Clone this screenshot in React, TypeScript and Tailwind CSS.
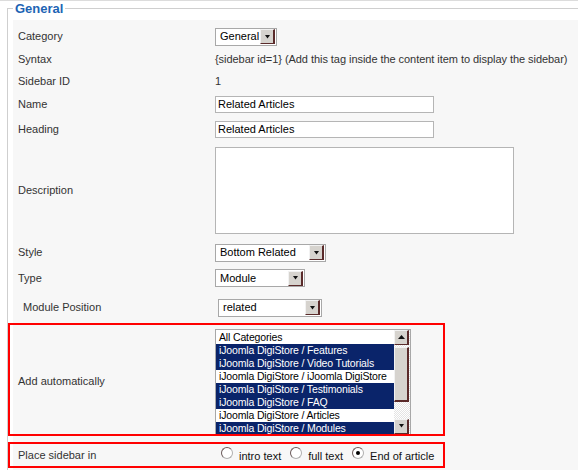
import React from 'react';

const ArrowBtn: React.FC<{ up?: boolean }> = ({ up }) => (
  <div className="flex h-[15px] w-[15px] shrink-0 items-center justify-center border-t border-l border-t-[#f2f2f2] border-l-[#f2f2f2] border-r-2 border-b border-r-[#5a2a2a] border-b-[#5a2a2a] bg-[#d6d3ce]">
    <svg width="7" height="4" viewBox="0 0 7 4">
      {up ? <path d="M0 4 L3.5 0 L7 4 Z" fill="#111" /> : <path d="M1 0 L6 0 L3.5 3.5 Z" fill="#111" />}
    </svg>
  </div>
);

const Select: React.FC<{ value: string; className: string }> = ({ value, className }) => (
  <div className={`flex h-[18px] items-center border border-[#a8a8a8] bg-white pr-px ${className}`}>
    <span className="flex-1 pl-[4px] text-[11px] leading-none text-black">{value}</span>
    <ArrowBtn />
  </div>
);

const Radio: React.FC<{ checked?: boolean; label: string }> = ({ checked, label }) => (
  <div className="flex items-start gap-[6px]">
    <span className="flex h-[12px] w-[12px] items-center justify-center rounded-full border border-[#b0b0b0] border-t-[#6a5a5a] border-l-[#6a5a5a] bg-white">
      {checked && <span className="h-[4px] w-[4px] rounded-full bg-black" />}
    </span>
    <span className="mt-[3px] text-[11px] leading-[13px] text-[#111]">{label}</span>
  </div>
);

const categories: { label: string; sel: boolean }[] = [
  { label: 'All Categories', sel: false },
  { label: 'iJoomla DigiStore / Features', sel: true },
  { label: 'iJoomla DigiStore / Video Tutorials', sel: true },
  { label: 'iJoomla DigiStore / iJoomla DigiStore', sel: false },
  { label: 'iJoomla DigiStore / Testimonials', sel: true },
  { label: 'iJoomla DigiStore / FAQ', sel: true },
  { label: 'iJoomla DigiStore / Articles', sel: false },
  { label: 'iJoomla DigiStore / Modules', sel: true },
];

const Row: React.FC<{ label: string; h: string; indent?: boolean; children?: React.ReactNode }> = ({
  label,
  h,
  indent,
  children,
}) => (
  <div className={`flex items-center ${h}`}>
    <div className={indent ? 'w-[205px] shrink-0 pl-[10px]' : 'w-[202px] shrink-0 pl-[5px]'}>{label}</div>
    <div className="flex items-center">{children}</div>
  </div>
);

export default function App() {
  return (
    <div className="relative h-[470px] w-[578px] overflow-hidden bg-white font-['Liberation_Sans',Arial,sans-serif] text-[11px] text-[#333]">
      <div className="h-px bg-[#dcdcdc]" />
      <fieldset className="ml-[7px] w-[640px] border border-[#cfcfcf] pl-[5px]">
        <legend className="ml-0 px-[2px] text-[13px] font-bold leading-[15px] text-[#1d64b4]">General</legend>
        <div className="mt-[4px] bg-[#f7f7f7] pt-[5px] pb-[10px]">
          <Row label="Category" h="h-[23px]">
            <Select value="General" className="w-[62px]" />
          </Row>
          <Row label="Syntax" h="h-[22px]">
            <span className="tracking-[-0.05px]">
              {'{sidebar id=1} (Add this tag inside the content item to display the sidebar)'}
            </span>
          </Row>
          <Row label="Sidebar ID" h="h-[22px]">
            <span>1</span>
          </Row>
          <Row label="Name" h="h-[25px]">
            <div className="flex h-[17px] w-[219px] items-center border border-[#b5b5b5] bg-white pl-[2px] text-black">
              Related Articles
            </div>
          </Row>
          <Row label="Heading" h="h-[25px]">
            <div className="flex h-[17px] w-[219px] items-center border border-[#b5b5b5] bg-white pl-[2px] text-black">
              Related Articles
            </div>
          </Row>
          <Row label="Description" h="h-[97px]">
            <div className="h-[87px] w-[299px] border border-[#b5b5b5] bg-white" />
          </Row>
          <Row label="Style" h="h-[27px]">
            <Select value="Bottom Related" className="w-[111px]" />
          </Row>
          <Row label="Type" h="h-[24px]">
            <Select value="Module" className="w-[90px]" />
          </Row>
          <Row label="Module Position" h="h-[35px]" indent>
            <Select value="related" className="w-[104px]" />
          </Row>
          <Row label="Add automatically" h="h-[113px]">
            <div className="flex h-[106px] w-[196px] shrink-0 border border-[#a8a8a8] bg-white">
              <div className="min-w-0 flex-1 overflow-hidden pt-px">
                {categories.map((c) => (
                  <div
                    key={c.label}
                    className={`h-[13px] whitespace-nowrap pl-[3px] text-[10.5px] leading-[13px] tracking-[-0.15px] ${
                      c.sel ? 'bg-[#0a246a] text-white' : 'text-black'
                    }`}
                  >
                    {c.label}
                  </div>
                ))}
              </div>
              <div className="flex w-[16px] shrink-0 flex-col bg-[repeating-conic-gradient(#e4e4e4_0_25%,#ffffff_0_50%)] bg-[length:2px_2px]">
                <ArrowBtn up />
                <div className="mt-[2px] h-[55px] w-[15px] border-t border-l border-t-[#f2f2f2] border-l-[#f2f2f2] border-r-2 border-b-2 border-r-[#5a2a2a] border-b-[#5a2a2a] bg-[#d6d3ce]" />
                <div className="flex-1" />
                <ArrowBtn />
              </div>
            </div>
          </Row>
          <div className="h-[4px]" />
          <Row label="Place sidebar in" h="h-[26px]">
            <div className="ml-[6px] flex items-center gap-[9px]">
              <Radio label="intro text" />
              <Radio label="full text" />
              <Radio label="End of article" checked />
            </div>
          </Row>
        </div>
      </fieldset>
      <div className="absolute left-[8px] top-[323px] h-[113px] w-[437px] border-2 border-[#ff0000]" />
      <div className="absolute left-[8px] top-[442px] h-[26px] w-[437px] border-2 border-[#ff0000]" />
    </div>
  );
}
